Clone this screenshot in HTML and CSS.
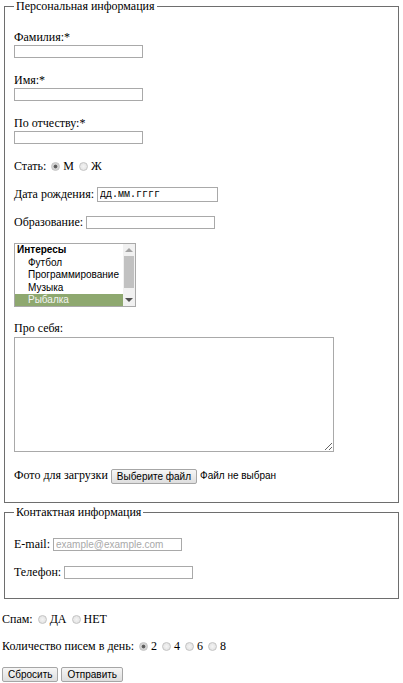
FILE: index.html
```html
<!DOCTYPE html>
<html lang="ru">
<head>
<meta charset="utf-8">
<title>Анкета</title>
<link rel="stylesheet" href="styles.css">
</head>
<body>
<form class="form">
  <fieldset class="group">
    <legend class="group-title">Персональная информация</legend>
    <p class="field stack"><span class="label">Фамилия:*</span><input class="text stacked" type="text"></p>
    <p class="field stack"><span class="label">Имя:*</span><input class="text stacked" type="text"></p>
    <p class="field stack"><span class="label">По отчеству:*</span><input class="text stacked" type="text"></p>
    <p class="row">Стать: <input class="radio" type="radio" name="sex" checked>М <input class="radio" type="radio" name="sex">Ж</p>
    <p class="row">Дата рождения: <input class="text date" type="text" value="дд.мм.гггг"></p>
    <p class="row">Образование: <input class="text" type="text"></p>
    <div class="field listwrap">
      <div class="listbox">
        <ul class="options">
          <li class="opt-group">Интересы</li>
          <li class="opt">Футбол</li>
          <li class="opt">Программирование</li>
          <li class="opt">Музыка</li>
          <li class="opt selected">Рыбалка</li>
        </ul>
        <div class="scrollbar">
          <span class="arrow up"></span>
          <span class="track"><span class="thumb"></span></span>
          <span class="arrow down"></span>
        </div>
      </div>
    </div>
    <p class="field about"><span class="label">Про себя:</span><textarea class="area"></textarea></p>
    <p class="row upload">Фото для загрузки <span class="btn">Выберите файл</span> <span class="file-status">Файл не выбран</span></p>
  </fieldset>

  <fieldset class="group contacts">
    <legend class="group-title">Контактная информация</legend>
    <p class="row">E-mail: <input class="text" type="text" placeholder="example@example.com"></p>
    <p class="row">Телефон: <input class="text" type="text"></p>
  </fieldset>

  <p class="row tail spam">Спам: <input class="radio" type="radio" name="spam">ДА <input class="radio" type="radio" name="spam">НЕТ</p>
  <p class="row tail">Количество писем в день: <input class="radio" type="radio" name="cnt" checked>2 <input class="radio" type="radio" name="cnt">4 <input class="radio" type="radio" name="cnt">6 <input class="radio" type="radio" name="cnt">8</p>
  <p class="row tail actions"><span class="btn">Сбросить</span> <span class="btn">Отправить</span></p>
</form>
</body>
</html>
```

FILE: styles.css
```css
html, body {
  background: #fff;
}
body {
  margin: 0 2px;
  font-family: "Liberation Serif", serif;
  font-size: 12px;
  line-height: 15px;
  color: #000;
}
.form { margin: 0; }

.group {
  margin: 0 2px;
  padding: 4px 9px 5px 9px;
  border: 1px solid #6e6e6e;
}
.contacts {
  margin-top: 3px;
  padding-top: 5px;
}
.group-title {
  padding: 0 2px;
  line-height: 13px;
}

.field, .row {
  margin: 13px 0;
}
.stack { padding-bottom: 2px; }
.about { padding-bottom: 2px; }
.label { display: block; }

.text {
  box-sizing: border-box;
  width: 129px;
  height: 13px;
  margin: 1px 0 0;
  padding: 0 2px;
  border: 1px solid #a9a9a9;
  font-family: "Liberation Sans", sans-serif;
  font-size: 10px;
  vertical-align: top;
  background: #fff;
}
.text::placeholder { color: #a9a9a9; }
.stacked {
  display: block;
  margin: 0;
}
.date {
  width: 121px;
  height: 15px;
  margin: 0;
  font-family: "Liberation Mono", monospace;
  font-size: 10px;
  color: #000;
}

.radio {
  -webkit-appearance: none;
  appearance: none;
  box-sizing: border-box;
  width: 9px;
  height: 9px;
  margin: 0 3px 0 2px;
  border: 1px solid #c4c4c4;
  border-radius: 50%;
  background: radial-gradient(circle, #f4f4f4 0, #dedede 100%);
  vertical-align: -1px;
}
.radio:checked {
  background: radial-gradient(circle, #555 0, #666 1.6px, #cfcfcf 2.2px, #dedede 100%);
}

.listwrap { margin: 13px 0 14px; }
.listbox {
  display: flex;
  box-sizing: border-box;
  width: 122px;
  height: 64px;
  border: 1px solid #a9a9a9;
  font-family: "Liberation Sans", sans-serif;
  font-size: 10px;
  line-height: 12.5px;
  overflow: hidden;
}
.options {
  flex: 1;
  margin: 0;
  padding: 0;
  list-style: none;
}
.options li { padding-left: 2px; white-space: nowrap; }
.opt-group { font-weight: bold; }
.opt { padding-left: 13px !important; }
.selected {
  background: #8ea86f;
  color: #f4f4f4;
}
.scrollbar {
  display: flex;
  flex-direction: column;
  width: 12px;
  background: #f1f1f1;
}
.arrow {
  height: 12px;
  display: flex;
  align-items: center;
  justify-content: center;
}
.arrow::before {
  content: "";
  border-left: 4px solid transparent;
  border-right: 4px solid transparent;
}
.up::before { border-bottom: 4px solid #a3a3a3; }
.down::before { border-top: 4px solid #505050; }
.track {
  flex: 1;
  padding: 0 1px;
}
.thumb {
  display: block;
  height: 32px;
  background: #c1c1c1;
}

.area {
  display: block;
  box-sizing: border-box;
  width: 320px;
  height: 115px;
  margin: 1px 0 0;
  border: 1px solid #a9a9a9;
  padding: 2px;
  font-family: "Liberation Mono", monospace;
}

.upload { line-height: 16px; }

.tail { margin: 12px 0; }
.spam { margin-top: 13px; }

.btn {
  display: inline-block;
  box-sizing: border-box;
  height: 15px;
  padding: 0 5px;
  border: 1px solid #a6a6a6;
  border-radius: 2px;
  background: linear-gradient(#f6f6f6, #dedede);
  font-family: "Liberation Sans", sans-serif;
  font-size: 10px;
  line-height: 13px;
  vertical-align: middle;
}
.file-status {
  font-family: "Liberation Sans", sans-serif;
  font-size: 10px;
}
.actions { margin-bottom: 0; }
```
